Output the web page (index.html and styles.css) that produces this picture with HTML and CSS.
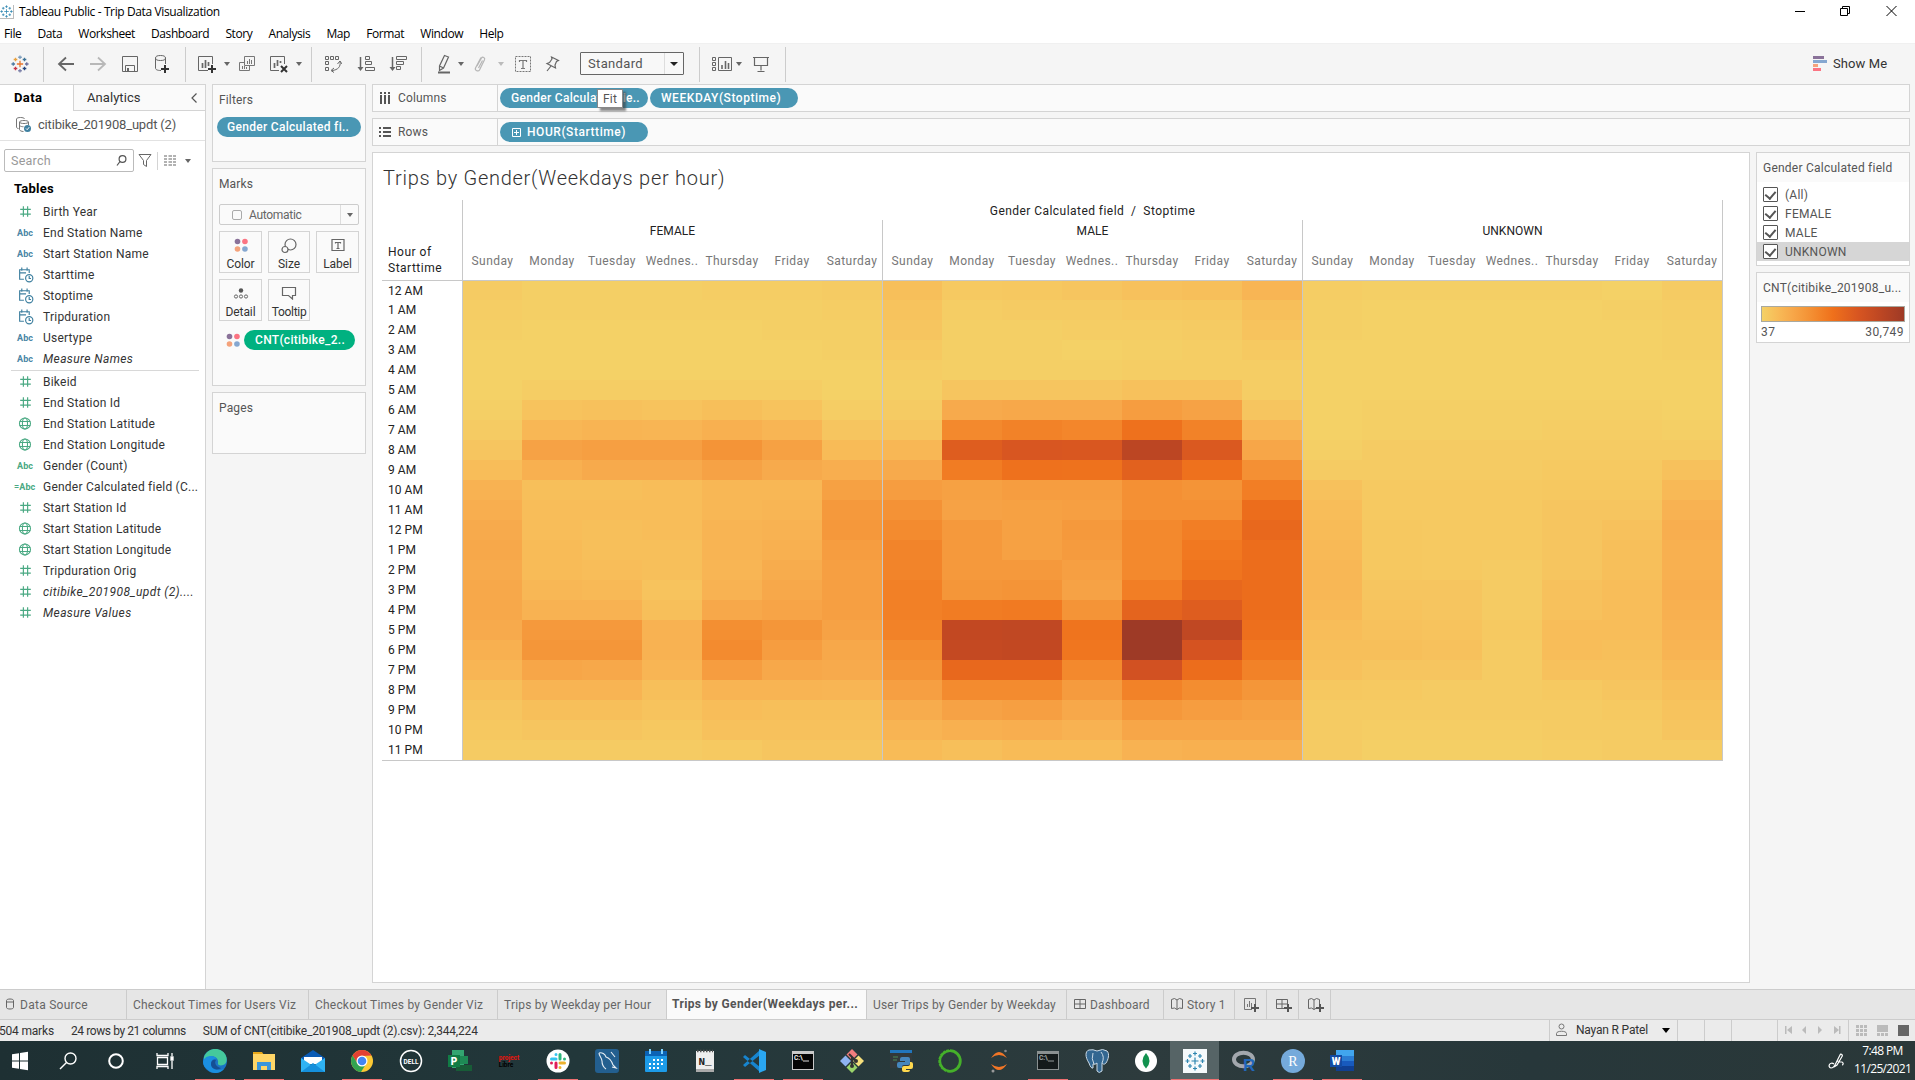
FILE: index.html
```html
<!DOCTYPE html>
<html lang="en">
<head>
<meta charset="utf-8">
<title>Tableau Public - Trip Data Visualization</title>
<link rel="stylesheet" href="styles.css">
</head>
<body>
<svg class="defs" aria-hidden="true">
  <symbol id="hash" viewBox="0 0 16 16"><path d="M6 3v10M10 3v10M3 6h10M3 10.500h10" stroke="#4aa983" stroke-width="1.100" fill="none"/></symbol>
  <symbol id="globe" viewBox="0 0 16 16"><g fill="none" stroke="#4aa983"><circle cx="7.500" cy="8" r="5.200"/><ellipse cx="7.500" cy="8" rx="2.400" ry="5.200"/><path d="M2.500 6.200h10M2.500 9.800h10"/></g></symbol>
  <symbol id="date" viewBox="0 0 16 16"><g fill="none" stroke="#3f80a0" stroke-width="1.100"><path d="M6.500 12.500H2.500v-9h9v3M2.500 6.500h6M4.500 1.500v3M9.500 1.500v3"/><circle cx="11.500" cy="11.500" r="3.400"/><path d="M11.500 9.500v2.300h1.700"/></g></symbol>
  <symbol id="dots" viewBox="0 0 16 16"><circle cx="4" cy="4" r="3.200" fill="#8a7299"/><circle cx="12.500" cy="4" r="3.200" fill="#fb7482"/><circle cx="4" cy="12.500" r="3.200" fill="#f4a27b"/><circle cx="12.500" cy="12.500" r="3.200" fill="#85a7d0"/></symbol>
  <symbol id="plus" viewBox="0 0 8 8"><path d="M4 0v8M0 4h8" stroke="#555" stroke-width="2"/></symbol>
  <symbol id="grid" viewBox="0 0 14 14"><path d="M1.500 2.500h11v9h-11zM1.500 7h11M7 2.500v9" fill="none" stroke="#666"/></symbol>
  <symbol id="book" viewBox="0 0 14 14"><path d="M1.500 2.500l3-1 2.500 1.500 2.500-1.500 3 1v9l-3-.5-2.500 1.500-2.500-1.500-3 .5zM7 3v9.500" fill="none" stroke="#666"/></symbol>
  <symbol id="tableau" viewBox="0 0 20 20"><g fill="none" stroke-width="1.400"><path d="M10 6.500v7M6.500 10h7" stroke="#e8762b"/><path d="M10 .5v4M8 2.500h4" stroke="#7a9cbc"/><path d="M10 15.500v4M8 17.500h4" stroke="#7a7fa8"/><path d="M.5 10h4M2.500 8v4" stroke="#4a78a0"/><path d="M15.500 10h4M17.500 8v4" stroke="#6b6f9c"/><path d="M5 3v4M3 5h4" stroke="#e9a13d"/><path d="M15 3v4M13 5h4" stroke="#3d7396"/><path d="M5 13v4M3 15h4" stroke="#c93545"/><path d="M15 13v4M13 15h4" stroke="#24437c"/></g></symbol>
  <symbol id="tableau-blue" viewBox="0 0 20 20"><path d="M10 6.500v7M6.500 10h7M10 .5v4M8 2.500h4M10 15.500v4M8 17.500h4M.5 10h4M2.500 8v4M15.500 10h4M17.500 8v4M5 3v4M3 5h4M15 3v4M13 5h4M5 13v4M3 15h4M15 13v4M13 15h4" fill="none" stroke="#2f86b0" stroke-width="1.200"/></symbol>
  <symbol id="console" viewBox="0 0 24 24"><rect x="1" y="2" width="22" height="19" fill="#c9c9c9"/><rect x="2" y="5" width="20" height="15" fill="#050505"/><path d="M12 12h6" stroke="#ddd"/></symbol>
</svg>

<header class="titlebar">
  <span class="app-icon"><svg width="13" height="13"><use href="#tableau-blue"/></svg></span>
  <span class="app-title">Tableau Public - Trip Data Visualization</span>
  <svg class="window-buttons" width="102" height="12" fill="none" stroke="#000"><path d="M0 6.500h10"/><path d="M45.500 3.500h7v7h-7zM47.500 3.500v-2h7v7h-2"/><path d="M91.500 1l10 10M101.500 1l-10 10"/></svg>
</header>
<nav class="menubar"><span>File</span><span>Data</span><span>Worksheet</span><span>Dashboard</span><span>Story</span><span>Analysis</span><span>Map</span><span>Format</span><span>Window</span><span>Help</span></nav>

<div class="toolbar">
  <svg width="18" height="18"><use href="#tableau"/></svg>
  <i class="sep"></i>
  <svg width="18" height="18" fill="none" stroke="#666" stroke-width="1.800"><path d="M17 9H2M9 2.500L2 9l7 6.500"/></svg>
  <svg width="18" height="18" fill="none" stroke="#b8b8b8" stroke-width="1.800"><path d="M1 9h15M9 2.500L16 9l-7 6.500"/></svg>
  <svg width="18" height="18" fill="none" stroke="#666"><path d="M1.500 1.500h15v15h-15zM4.500 16.500v-6h9v6"/><path d="M7 13v3" stroke-width="2"/></svg>
  <svg width="18" height="20" fill="none" stroke="#666"><path d="M8 16.500c-4 0-5.500-1-5.500-2.500V4M12.500 4v6"/><ellipse cx="7.500" cy="4" rx="5" ry="2.500"/><path d="M12 11v8M8 15h8" stroke="#333" stroke-width="2"/></svg>
  <i class="sep"></i>
  <svg width="20" height="20" fill="none" stroke="#666"><path d="M11 16.500H1.500v-14h14V10"/><path d="M5.500 14V9M8.500 14V6M11.500 12V8" stroke-width="1.700"/><path d="M15 11v8M11 15h8" stroke="#333" stroke-width="2"/></svg>
  <i class="caret"></i>
  <svg width="18" height="18" fill="none" stroke="#777"><path d="M6.500 1.500h10v9h-10zM6.500 7.500h-5v8h10v-5M9.500 9V6M11.500 9V4M13.500 9V5M4.500 14v-3M6.500 14v-3M8.500 14v-2"/></svg>
  <svg width="20" height="20" fill="none" stroke="#666"><path d="M10 16.500H1.500v-14h14V10"/><path d="M5.500 14V9M8.500 12V6M11.500 9V7" stroke-width="1.700"/><path d="M12 12l6 6M18 12l-6 6" stroke="#333" stroke-width="2"/></svg>
  <i class="caret"></i>
  <i class="sep"></i>
  <svg width="18" height="18" fill="none" stroke="#666"><path d="M1.500 1.500h3v3h-3zM6.500 1.500h3v3h-3zM11.500 1.500h3v3h-3zM1.500 6.500h3v3h-3zM1.500 12.500h3v3h-3zM16 6.500c1 5-2 8.500-8 9M13.500 9l2.500-3 2 3M10 13l-3 2.500 3 2"/></svg>
  <svg width="18" height="18" fill="none" stroke="#666"><path d="M3.500 2v12" stroke-width="1.500"/><path d="M.5 12l3 4 3-4z" fill="#666" stroke="none"/><path d="M8.500 1.500h4v3h-4zM8.500 6.500h6v3h-6zM8.500 12.500h9v3h-9z"/></svg>
  <svg width="18" height="18" fill="none" stroke="#666"><path d="M3.500 2v12" stroke-width="1.500"/><path d="M.5 12l3 4 3-4z" fill="#666" stroke="none"/><path d="M7.500 1.500h10v3h-10zM7.500 6.500h7v3h-7zM7.500 11.500h4v3h-4z"/></svg>
  <i class="sep"></i>
  <svg width="18" height="20" fill="none" stroke="#666" stroke-width="1.200"><path d="M9.500 1.500l4 1.500-5 11-4 2.500v-4.500zM4.500 12l4 2"/><path d="M3 18.500h12" stroke-width="2"/></svg>
  <i class="caret"></i>
  <svg width="18" height="18" fill="none" stroke="#b5b5b5" stroke-width="1.200"><path d="M5 11l4.500-8c1-1.600 4-.4 3 1.800L7.500 15c-1.200 2-5 .5-4-2L9 2.500M6.500 13l4-7.500"/></svg>
  <i class="caret pale"></i>
  <svg width="18" height="18" fill="none" stroke="#777"><path d="M1.500 1.500h15v15h-15z" stroke-dasharray="2 1"/><path d="M5.500 7V5.500h7V7M9 5.500v8M7 13.500h4" stroke-width="1.200"/></svg>
  <svg width="18" height="18" fill="none" stroke="#666" stroke-width="1.200"><path d="M7.500 2l7 3.500-2 1-1.500 3.500.5 3-8.500-4.500 2.500-1 2.500-3.500zM7 11l-4 5"/></svg>
  <div class="select"><span>Standard</span><b><i></i></b></div>
  <i class="sep"></i>
  <svg width="20" height="18" fill="none" stroke="#666"><path d="M.5 2.500h3v3h-3zM.5 7.500h3v3h-3zM.5 12.500h3v3h-3zM6.500 2.500h13v13h-13z"/><path d="M10 14v-4M13.500 14V6M16.500 14V8" stroke-width="1.600"/></svg>
  <i class="caret"></i>
  <svg width="18" height="18" fill="none" stroke="#666" stroke-width="1.200"><path d="M1 2.500h16M2.500 2.500v8h13v-8M9 10.500v5M5.500 16.500h7"/></svg>
  <i class="sep"></i>
  <div class="show-me"><svg width="14" height="16"><path fill="#8a7299" d="M0 0h11v3H0z"/><path fill="#85a7d0" d="M0 4h14v3H0z"/><path fill="#f4a27b" d="M0 8h5v3H0z"/><path fill="#fb7482" d="M0 12h8v3H0z"/></svg>Show Me</div>
</div>

<main class="workspace">
  <aside class="data-pane">
    <div class="pane-tabs"><b>Data</b><span>Analytics<svg width="6" height="10" fill="none" stroke="#555" stroke-width="1.200"><path d="M5.500 .5L1 5l4.500 4.500"/></svg></span></div>
    <div class="source"><svg width="17" height="17" fill="none" stroke="#777"><path d="M1.500 3c0-2 8-2 8 0M1.500 3v8c0 1 1 1.500 2 1.500M4.500 6c0-2 9-2 9 0s-9 2-9 0v7.500c0 1 2 2 4 2M13.500 6v3M4.500 9.500c1 1 3 1.300 4 1.200"/><circle cx="12.500" cy="12.500" r="3.500" fill="#3f80a0" stroke="none"/><path d="M11 12.500l1.200 1.200 2-2.500" stroke="#fff"/></svg>citibike_201908_updt (2)</div>
    <div class="search-row">
      <div class="search">Search<svg width="11" height="11" fill="none" stroke="#555" stroke-width="1.200"><circle cx="6.500" cy="4" r="3.400"/><path d="M4 6.500L1 10.500"/></svg></div>
      <svg width="14" height="13" fill="none" stroke="#666"><path d="M1 .5h12L8.500 6.500v6l-3-2v-4z"/></svg>
      <i class="mini-sep"></i>
      <svg width="13" height="11" stroke="#666" stroke-width="1.200"><path d="M0 1h3M4.500 1H8M9 1h3M0 4h3M4.500 4H8M9 4h3M0 7h3M4.500 7H8M9 7h3M0 10h3M4.500 10H8M9 10h3"/></svg>
      <i class="caret"></i>
    </div>
    <h2>Tables</h2>
    <ul class="fields">
      <li><svg><use href="#hash"/></svg>Birth Year</li>
      <li><b>Abc</b>End Station Name</li>
      <li><b>Abc</b>Start Station Name</li>
      <li><svg><use href="#date"/></svg>Starttime</li>
      <li><svg><use href="#date"/></svg>Stoptime</li>
      <li><svg><use href="#date"/></svg>Tripduration</li>
      <li><b>Abc</b>Usertype</li>
      <li><b>Abc</b><em>Measure Names</em></li>
    </ul>
    <ul class="fields measures">
      <li><svg><use href="#hash"/></svg>Bikeid</li>
      <li><svg><use href="#hash"/></svg>End Station Id</li>
      <li><svg><use href="#globe"/></svg>End Station Latitude</li>
      <li><svg><use href="#globe"/></svg>End Station Longitude</li>
      <li><b>Abc</b>Gender (Count)</li>
      <li><b>=Abc</b>Gender Calculated field (C...</li>
      <li><svg><use href="#hash"/></svg>Start Station Id</li>
      <li><svg><use href="#globe"/></svg>Start Station Latitude</li>
      <li><svg><use href="#globe"/></svg>Start Station Longitude</li>
      <li><svg><use href="#hash"/></svg>Tripduration Orig</li>
      <li><svg><use href="#hash"/></svg><em>citibike_201908_updt (2)....</em></li>
      <li><svg><use href="#hash"/></svg><em>Measure Values</em></li>
    </ul>
  </aside>

  <aside class="cards">
    <section class="card filters"><h3>Filters</h3><span class="pill">Gender Calculated fi..</span></section>
    <section class="card marks">
      <h3>Marks</h3>
      <div class="mark-type"><i></i><span>Automatic</span><b><i class="caret"></i></b></div>
      <div class="mark-grid">
        <div><svg width="14" height="14"><use href="#dots"/></svg>Color</div>
        <div><svg width="16" height="16" fill="none" stroke="#666" stroke-width="1.200"><circle cx="9.500" cy="6.500" r="5.500"/><circle cx="4" cy="11.500" r="3" fill="#fafafa"/></svg>Size</div>
        <div><svg width="14" height="14" fill="none" stroke="#666" stroke-width="1.200"><path d="M1 1.500h12v11H1zM4.500 5.500v-1h5v1M7 4.500v6M5.500 10.500h3"/></svg>Label</div>
        <div><svg width="16" height="14" fill="none" stroke="#666"><circle cx="8" cy="4.500" r="2.200" fill="#555" stroke="none"/><circle cx="3" cy="10.500" r="1.600"/><circle cx="8" cy="10.500" r="1.600"/><circle cx="13" cy="10.500" r="1.600"/></svg>Detail</div>
        <div><svg width="16" height="14" fill="none" stroke="#666" stroke-width="1.200"><path d="M1.500 1.500h13v8h-3v3.500l-4-3.500h-6z"/></svg>Tooltip</div>
      </div>
      <div class="encoding"><svg width="14" height="14"><use href="#dots"/></svg><span class="pill green">CNT(citibike_2..</span></div>
    </section>
    <section class="card pages"><h3>Pages</h3></section>
  </aside>

  <div class="stage">
    <div class="shelf">
      <div class="shelf-name"><svg width="12" height="12" stroke="#555" stroke-width="2"><path d="M2 3v9M6 3v9M10 3v9M2 0v2M6 0v2M10 0v2"/></svg>Columns</div>
      <span class="pill">Gender Calculated fie..</span><span class="pill">WEEKDAY(Stoptime)</span>
      <span class="tip">Fit</span>
    </div>
    <div class="shelf">
      <div class="shelf-name"><svg width="12" height="12" stroke="#555" stroke-width="2"><path d="M0 2h2M4 2h8M0 6h2M4 6h8M0 10h2M4 10h8"/></svg>Rows</div>
      <span class="pill expandable"><svg width="9" height="9" fill="none" stroke="#fff"><path d="M.5 .5h8v8h-8zM4.500 2v5M2 4.500h5"/></svg>HOUR(Starttime)</span>
    </div>
    <div class="stage-body">
      <section class="viz">
        <h1>Trips by Gender(Weekdays per hour)</h1>
        <div class="table">
          <div class="corner">Hour of<br>Starttime</div>
          <div class="col-head">
            <div class="dims">Gender Calculated field &nbsp;/ &nbsp;Stoptime</div>
            <div class="groups" id="groups"></div>
          </div>
          <div class="hours" id="hours"></div>
          <div class="heat" id="heat"></div>
        </div>
      </section>
      <aside class="legends">
        <section class="legend">
          <h4>Gender Calculated field</h4>
          <label><i></i>(All)</label>
          <label><i></i>FEMALE</label>
          <label><i></i>MALE</label>
          <label class="selected"><i></i>UNKNOWN</label>
        </section>
        <section class="legend color-legend">
          <h4>CNT(citibike_201908_u...</h4>
          <div class="ramp"></div>
          <div class="ramp-labels"><span>37</span><span>30,749</span></div>
        </section>
      </aside>
    </div>
  </div>
</main>

<nav class="sheets">
  <span class="source-tab"><svg width="8" height="12" fill="none" stroke="#666"><path d="M.5 2.500v7c0 2 7 2 7 0v-7c0-2-7-2-7 0zM.5 4h7"/></svg>Data Source</span>
  <span>Checkout Times for Users Viz</span>
  <span>Checkout Times by Gender Viz</span>
  <span>Trips by Weekday per Hour</span>
  <span class="active">Trips by Gender(Weekdays per...</span>
  <span>User Trips by Gender by Weekday</span>
  <span class="iconic"><svg width="14" height="14"><use href="#grid"/></svg>Dashboard</span>
  <span class="iconic"><svg width="14" height="14"><use href="#book"/></svg>Story 1</span>
  <span class="add"><svg width="17" height="17" fill="none" stroke="#777"><path d="M9 12.500H1.500v-11h11V8M4.500 10V7M6.500 10V4M8.500 10V6"/><use href="#plus" x="8" y="7" width="8" height="8"/></svg></span>
  <span class="add"><svg width="17" height="17"><use href="#grid" x="0" y="0" width="14" height="14"/><use href="#plus" x="9" y="7" width="8" height="8"/></svg></span>
  <span class="add"><svg width="17" height="17"><use href="#book" x="0" y="0" width="14" height="14"/><use href="#plus" x="9" y="7" width="8" height="8"/></svg></span>
</nav>

<footer class="status">
  <span>504 marks</span><span>24 rows by 21 columns</span><span>SUM of CNT(citibike_201908_updt (2).csv): 2,344,224</span>
  <div class="status-right">
    <div><svg width="11" height="14" fill="none" stroke="#777"><circle cx="5.500" cy="3.500" r="2.500"/><path d="M.5 12.500v-2c0-3 10-3 10 0v2z"/></svg>Nayan R Patel<i class="caret dark"></i></div>
    <div></div><div></div><div></div>
    <div><svg width="56" height="8" fill="#bbb"><path d="M0 0h1.500v8H0zM7 0v8L2 4zM21 0v8l-4-4zM33 0v8l4-4zM49 0v8l5-4zM54 0h1.500v8H54z"/></svg></div>
    <div><svg width="54" height="11" fill="#bbb"><path d="M0 0h3v3H0zM4 0h3v3H4zM8 0h3v3H8zM0 4h3v3H0zM4 4h3v3H4zM8 4h3v3H8zM0 8h3v3H0zM4 8h3v3H4zM8 8h3v3H8zM21 0h11v7H21zM21 8h3v3h-3zM25 8h3v3h-3zM29 8h3v3h-3z"/><path d="M42 0h11v11H42z" fill="#666"/></svg></div>
  </div>
</footer>

<footer class="taskbar">
  <span class="start"><svg viewBox="0 0 24 24"><path fill="#fff" d="M4 5.200l7-1v7.300H4zM12 4l8-1.200v8.700h-8zM4 12.500h7v7.300l-7-1zM12 12.500h8v8.700L12 20z"/></svg></span>
  <span><svg viewBox="0 0 24 24" fill="none" stroke="#fff" stroke-width="1.400"><circle cx="14.500" cy="9.500" r="5.500"/><path d="M10.500 13.500L4 20"/></svg></span>
  <span><svg viewBox="0 0 24 24" fill="none" stroke="#fff" stroke-width="2"><circle cx="12" cy="12" r="6.800"/></svg></span>
  <span><svg viewBox="0 0 24 24" fill="none" stroke="#fff" stroke-width="1.300"><path d="M4 4v2.500h11V4M4.500 8.500h10v7h-10zM4 20v-2.500h11V20M19 4v3M19 12v8"/><path d="M18 8h2v3h-2z" fill="#fff"/></svg></span>
  <span class="run"><svg viewBox="0 0 24 24"><circle cx="12" cy="12" r="12" fill="#1b74c4"/><path d="M1 8C4 0 13-2 19 2c5 3 6 10 3 13-2 2-8 2-7-1 1-5-5-8-9-6-2 0-4 1-5 3z" fill="#45c99c"/><path d="M0 13c1-7 11-8 14-3-4-1-6 2-6 5 1 6 7 7 13 5-4 5-12 5-16 1-3-2-5-5-5-8z" fill="#1b8fe0"/><path d="M8 15c0-3 2-5 5-4-2 3 0 7 5 8-4 3-10 1-10-4z" fill="#154f94"/></svg></span>
  <span class="run"><svg viewBox="0 0 24 24"><path fill="#e7a81a" d="M1 3h9l2 3v5H1z"/><path fill="#ffd667" d="M1 5h22v16H1z"/><path fill="#3b96dc" d="M5 13h14v8h-4v-4H9v4H5z"/></svg></span>
  <span><svg viewBox="0 0 24 24"><path fill="#0a5bb5" d="M0 9l12-8 12 8v5H0z"/><path fill="#fff" d="M3 8h18v7H3z"/><path fill="#2fb3f3" d="M0 9l12 8 12-8v14H0z"/><path fill="#1590dc" d="M0 23l12-9 12 9z"/></svg></span>
  <span class="run"><svg viewBox="0 0 24 24"><circle cx="12" cy="12" r="11" fill="#fcc934"/><path fill="#e34133" d="M2.500 6.500a11 11 0 0 1 19 0L12 7v5l-3.500 4z"/><path fill="#32a350" d="M2.500 6.500A11 11 0 0 0 11 23l5-8H8z"/><circle cx="12" cy="12" r="5.500" fill="#fff"/><circle cx="12" cy="12" r="4.300" fill="#4285f4"/></svg></span>
  <span><svg viewBox="0 0 24 24"><circle cx="12" cy="12" r="10.500" fill="none" stroke="#fff" stroke-width="1.500"/><text x="12" y="14.700" text-anchor="middle" class="mini" fill="#fff">DELL</text></svg></span>
  <span><svg viewBox="0 0 24 24"><path fill="#33a571" d="M4 1h12v18H4z"/><path fill="#1e8a55" d="M12 7h8v8h-8z"/><path fill="#185c37" d="M8 16h16v6H8z"/><rect y="6" width="12" height="12" fill="#117c45"/><text x="6" y="15.500" text-anchor="middle" class="letter" fill="#fff">P</text></svg></span>
  <span><svg viewBox="0 0 24 24"><text x="12" y="11" text-anchor="middle" class="mini" fill="#e8130c">project</text><text x="9" y="18" text-anchor="middle" class="mini" fill="#000">Libre</text></svg></span>
  <span class="run"><svg viewBox="0 0 24 24"><circle cx="12" cy="12" r="11.500" fill="#fff"/><g stroke-width="3" stroke-linecap="round"><path stroke="#36c5f0" d="M10 5.500v0M5.500 10H10"/><path stroke="#2eb67d" d="M14 5.500V10M18.500 10v0"/><path stroke="#ecb22e" d="M14 14h4.500M14 18.500v0"/><path stroke="#e01e5a" d="M10 14v4.500M5.500 14v0"/></g></svg></span>
  <span><svg viewBox="0 0 24 24"><rect width="24" height="24" rx="3" fill="#235f8f"/><path d="M4 4c3-1 6 1 7 4 4 1 6 5 7 8l3 3-4-1M4 4c0 3 3 5 3 8s1 6 4 8M16 3l4 5" fill="none" stroke="#e7eef4" stroke-width="1.100"/></svg></span>
  <span><svg viewBox="0 0 24 24"><rect x="1" y="2" width="22" height="21" rx="1" fill="#1d9be8"/><path fill="#0b63b5" d="M1 2h22v5H1z"/><path stroke="#7fd2ff" stroke-width="2" d="M6 0v5M18 0v5"/><path stroke="#fff" stroke-width="2" stroke-dasharray="2 2" d="M9 11h10M5 15h14M5 19h10"/></svg></span>
  <span><svg viewBox="0 0 24 24"><path fill="#eee" d="M3 2h18v18H3z"/><path fill="#aaa" d="M3 20h18v3H3z"/><path stroke="#555" stroke-width="2.500" stroke-dasharray="1.500 1.500" d="M4 2h16"/><text x="12" y="16" text-anchor="middle" class="code" fill="#222">N_</text></svg></span>
  <span class="run"><svg viewBox="0 0 24 24"><path d="M1 8l2-2 15 12v5zM1 16l2 2L18 6V1z" fill="#1785cf"/><path fill="#2aa7f2" d="M17 0l7 3v18l-7 3z"/></svg></span>
  <span class="run"><svg viewBox="0 0 24 24"><use href="#console"/><text x="3" y="11" class="mini" fill="#eee">C:\</text></svg></span>
  <span><svg viewBox="0 0 24 24"><path fill="#f27d7d" d="M12 0l5.500 5.500L12 11 6.500 5.500z"/><path fill="#8fb4f2" d="M5.500 6.500L11 12l-5.500 5.500L0 12z"/><path fill="#f6df7c" d="M18.500 6.500L24 12l-5.500 5.500L13 12z"/><path fill="#9ad46b" d="M12 13l5.500 5.500L12 24l-5.500-5.500z"/><path stroke="#333" stroke-width="2" fill="none" d="M9 5l3 3v9M12 8l4 4"/><circle cx="12" cy="17" r="2" fill="#333"/><circle cx="16" cy="12" r="2" fill="#333"/></svg></span>
  <span><svg viewBox="0 0 24 24"><path fill="#32393b" d="M1 1h22v18H1z"/><path fill="#2176bd" d="M1 1h22v3H1z"/><path stroke="#4d8b57" d="M4 8h5M4 11h4"/><path fill="#4586bd" d="M13 8h6a2 2 0 0 1 2 2v4a2 2 0 0 1-2 2h-4a2 2 0 0 0-2 2v1h-3a2 2 0 0 1-2-2v-2a2 2 0 0 1 2-2h6v-1h-5v-2a2 2 0 0 1 2-2z"/><path fill="#ffd94e" d="M19 23h-4a2 2 0 0 1-2-2v-2a2 2 0 0 1 2-2h4a2 2 0 0 0 2-2v-2h1a2 2 0 0 1 2 2v3a2 2 0 0 1-2 2h-5v1h4a2 2 0 0 1-2 2z"/></svg></span>
  <span><svg viewBox="0 0 24 24" fill="none"><circle cx="12" cy="12" r="10.300" stroke="#45b02a" stroke-width="2.800"/><path stroke="#233" stroke-dasharray="1 3" d="M12 .5a11.500 11.500 0 0 0 0 23"/></svg></span>
  <span><svg viewBox="0 0 24 24"><path fill="#f37626" d="M4 9q8-12 16 0-8-6-16 0zM4 15q8 12 16 0-8 6-16 0z"/><circle cx="18.500" cy="2" r="1.300" fill="#888"/><circle cx="6" cy="22" r="1.500" fill="#999"/></svg></span>
  <span class="run"><svg viewBox="0 0 24 24" opacity=".6"><use href="#console"/><text x="3" y="11" class="mini" fill="#eee">C:\</text></svg></span>
  <span><svg viewBox="0 0 24 24"><path d="M4 14C0 8 0 2 4 1q4-1 8 1 6-3 10 0c3 3 1 9-1 12-2 2-3 1-4 0v8q-3 3-5 0V14q-2 2-4 1v4q-2 1-4-5z" fill="#336791" stroke="#cbdae6"/><path d="M8 4q-2 6 1 11M16 3q4 5 1 11" fill="none" stroke="#cbdae6"/></svg></span>
  <span><svg viewBox="0 0 24 24"><circle cx="12" cy="12" r="11" fill="#fff"/><path fill="#12924f" d="M12 4q7 8 0 15.500Q5 12 12 4z"/></svg></span>
  <span class="run current"><svg viewBox="0 0 24 24"><path fill="#f5f9fb" d="M0 0h24v24H0z"/><use href="#tableau-blue" x="2" y="2" width="20" height="20"/></svg></span>
  <span><svg viewBox="0 0 24 24"><ellipse cx="11.500" cy="10.500" rx="9.500" ry="6.800" fill="none" stroke="#a3a8ae" stroke-width="4"/><text x="11" y="21.500" class="big-r" fill="#2267ba">R</text></svg></span>
  <span class="run"><svg viewBox="0 0 24 24"><circle cx="12" cy="12" r="12" fill="#75aadb"/><text x="12" y="17" text-anchor="middle" class="r" fill="#fff">R</text></svg></span>
  <span class="run"><svg viewBox="0 0 24 24"><path fill="#41a5ee" d="M6 1h18v6H6z"/><path fill="#2b7cd3" d="M6 7h18v5H6z"/><path fill="#185abd" d="M6 12h18v5H6z"/><path fill="#103f91" d="M6 17h18v5H6z"/><path fill="#124ba4" d="M0 6h12v12H0z"/><text x="6" y="15.500" text-anchor="middle" class="letter" fill="#fff">W</text></svg></span>
  <svg class="pen" width="16" height="16" fill="none" stroke="#fff" stroke-width="1.200"><path d="M6 11c-4-3-7 3-3 4 3 0 4-3 5-5l4-8c1-2 3 0 2 1.500L9 12l-3 2M9 8l5 1c2 1 1 3 0 3"/></svg>
  <div class="clock">7:48 PM<br>11/25/2021</div>
</footer>
<script src="heatmap.js"></script>
</body>
</html>
```
FILE: styles.css
```css
* { box-sizing: border-box; }
body { margin: 0; height: 1080px; display: flex; flex-direction: column; overflow: hidden; background: #f5f5f5; color: #333; font: 12px/16px Roboto, sans-serif; letter-spacing: .23px; }
h1, h2, h3, h4, ul { margin: 0; padding: 0; font-weight: 400; list-style: none; }
svg { display: block; flex: none; }
.defs { position: absolute; width: 0; height: 0; }

.titlebar, .menubar { background: #fff; color: #000; font-family: "Open Sans", sans-serif; letter-spacing: -.38px; display: flex; align-items: center; flex: none; }
.titlebar { height: 24px; }
.app-icon { width: 14px; height: 14px; border: solid #bbb; border-width: 0 1px 1px 0; margin-right: 5px; }
.app-title { flex: 1; }
.window-buttons { margin: -3px 18px 0 0; }
.menubar { height: 19px; padding-left: 4px; gap: 16.200px; letter-spacing: -.42px; }

.toolbar { flex: none; height: 41px; padding-left: 11px; border-top: 1px solid #f0f0f0; display: grid; align-items: center; justify-items: start; grid-template-columns: 32px 14px 32px 32px 32px 32px 12px 27px 14px 31px 27px 15px 13px 33px 32px 32px 14px 23px 14px 26px 16px 30px 36px 119px 13px 24px 16px 33px 1028px auto; }
.sep { width: 1px; height: 35px; background: #ccc; }
.caret { width: 0; height: 0; border: 3px solid transparent; border-top: 4px solid #666; border-bottom: 0; }
.caret.pale { border-top-color: #bbb; }
.caret.dark { border-width: 5px 4px 0; border-top-color: #000; }
.select { width: 104px; height: 23px; margin-top: -1px; border: 1px solid #666; border-radius: 1px; background: #f8f8f8; display: flex; align-items: center; font-size: 13px; letter-spacing: .34px; color: #555; }
.select span { flex: 1; padding-left: 7px; }
.select b { width: 19px; height: 100%; border-left: 1px solid #ddd; display: grid; place-items: center; }
.select b i { border: 4px solid transparent; border-top-color: #222; margin-top: 4px; }
.show-me { display: flex; gap: 6px; align-items: center; font-size: 13px; letter-spacing: .1px; color: #333; white-space: nowrap; margin-top: -1px; }

.workspace { flex: none; height: 905px; display: grid; grid-template-columns: 206px 154px 1538px; column-gap: 6px; }
.data-pane { background: #fff; border-right: 1px solid #d4d4d4; }
.pane-tabs { height: 27px; display: flex; font-size: 13px; line-height: 25px; border-top: 1px solid #d4d4d4; }
.pane-tabs b { width: 73px; padding-left: 14px; color: #000; letter-spacing: .4px; }
.pane-tabs span { flex: 1; display: flex; justify-content: space-between; align-items: center; padding: 0 8px 0 13px; background: #fafafa; border: solid #d4d4d4; border-width: 0 0 1px 1px; letter-spacing: .06px; }
.source { height: 30px; padding: 0 0 2px 15px; display: flex; align-items: center; gap: 6px; font-size: 13px; letter-spacing: -.18px; border-bottom: 1px solid #e2e2e2; color: #555; }
.search-row { height: 23px; margin: 8px 0 0 4px; display: flex; align-items: center; }
.search { width: 130px; height: 23px; border: 1px solid #bbb; border-radius: 2px; display: flex; align-items: center; justify-content: space-between; padding: 0 6px; color: #999; font-size: 12.500px; margin-right: 4px; }
.mini-sep { width: 1px; height: 18px; background: #d4d4d4; margin: 0 6px 0 5px; }
.search-row .caret { margin-left: 8px; }
.data-pane h2 { font-size: 13px; font-weight: 700; color: #000; padding-left: 14px; height: 29px; line-height: 34px; }
.fields li { height: 21px; display: flex; align-items: center; padding-left: 17px; white-space: nowrap; }
.fields svg { width: 17px; height: 17px; margin-right: 9px; }
.fields b { width: 26px; flex: none; color: #4a86a5; font-size: 9px; letter-spacing: .1px; }
.fields em { letter-spacing: .4px; }
.fields.measures { margin: 1px 6px 0 11px; border-top: 1px solid #d8d8d8; }
.measures li { padding-left: 6px; }
.measures b { color: #4aa983; }
.measures li:nth-child(6) b { width: 29px; margin-left: -3px; }

.cards { display: grid; grid-template-rows: 78px 218px 62px; row-gap: 6px; align-content: start; }
.card { background: #fafafa; border: 1px solid #d4d4d4; }
.card h3 { font-size: 12px; padding-left: 6px; color: #555; line-height: 31px; height: 32px; letter-spacing: .14px; }
.pill { display: flex; align-items: center; height: 20px; border-radius: 10px; background: #4a97b4; color: #fff; font-weight: 500; letter-spacing: .3px; white-space: nowrap; }
.filters .pill { width: 144px; margin-left: 4px; padding-left: 10px; }
.mark-type { height: 21px; margin: 3px 6px 6px; border: 1px solid #ccc; border-radius: 2px; display: flex; align-items: center; color: #666; }
.mark-type > i { width: 10px; height: 10px; margin: 0 7px 0 12px; border: 1.500px solid #aaa; border-radius: 2px; }
.mark-type span { flex: 1; letter-spacing: -.3px; }
.mark-type b { width: 18px; height: 100%; border-left: 1px solid #ddd; display: grid; place-items: center; }
.mark-grid { display: grid; grid-template-columns: 43px 42px 43px; grid-auto-rows: 42px; gap: 6px; margin-left: 6px; }
.mark-grid div { border: 1px solid #d4d4d4; display: flex; flex-direction: column; align-items: center; justify-content: space-between; padding: 6px 0 0; letter-spacing: -.1px; line-height: 15px; }
.mark-grid div:last-child { letter-spacing: -.3px; }
.encoding { display: flex; align-items: center; margin: 9px 0 0 13px; gap: 4px; }
.green { background: #00b180; width: 111px; padding-left: 11px; }

.stage { min-width: 0; display: flex; flex-direction: column; gap: 6px; }
.shelf { position: relative; height: 28px; flex: none; border: 1px solid #d4d4d4; background: #fafafa; display: flex; align-items: center; gap: 2px; }
.shelf-name { width: 125px; height: 100%; border-right: 1px solid #d4d4d4; display: flex; align-items: center; gap: 7px; padding-left: 6px; color: #555; letter-spacing: .14px; }
.shelf .pill { width: 148px; padding-left: 11px; letter-spacing: .55px; }
.shelf .pill:nth-child(2):not(.expandable) { letter-spacing: .3px; }
.expandable svg { margin-right: 6px; margin-left: 1px; }
.tip { position: absolute; left: 224px; top: 4px; width: 26px; height: 19px; line-height: 18px; text-align: center; border: 1px solid #888; background: #fff; box-shadow: 3px 3px 2px rgba(60, 60, 60, .6); color: #555; }
.stage-body { flex: none; height: 831px; display: grid; grid-template-columns: 1378px 154px; gap: 6px; }
.viz { background: #fff; border: 1px solid #d4d4d4; padding: 0 0 0 9px; }
.viz h1 { font-size: 20px; font-weight: 300; letter-spacing: .73px; line-height: 24px; height: 47px; padding: 13px 0 0 1px; }
.table { display: grid; grid-template-columns: 80px 1261px; grid-template-rows: 81px 480px; }
.corner { padding: 44px 0 0 6px; border-bottom: 1px solid #c8c8c8; letter-spacing: .5px; color: #222; }
.col-head { border: solid #c8c8c8; border-width: 0 1px 1px; }
.dims { height: 20px; line-height: 22px; text-align: center; letter-spacing: .45px; color: #222; }
.groups { display: grid; grid-template-columns: 419px 420px 420px; }
.group { height: 60px; }
.group + .group { border-left: 1px solid #c8c8c8; }
.group-name { text-align: center; height: 20px; line-height: 22px; letter-spacing: .05px; color: #222; }
.days { display: grid; grid-template-columns: 59px repeat(6, 60px); text-align: center; color: #777; line-height: 42px; letter-spacing: .45px; white-space: nowrap; }
.hours { border-bottom: 1px solid #c8c8c8; color: #222; letter-spacing: .05px; display: grid; grid-template-rows: 19px; grid-auto-rows: 20px; line-height: 20px; padding-left: 6px; }
.heat { display: grid; grid-template-columns: 420px 420px 420px; border: solid #c8c8c8; border-width: 0 1px 1px 0; }
.block { border-left: 1px solid #c8c8c8; display: grid; grid-template-columns: 59px repeat(6, 60px); grid-template-rows: 19px; grid-auto-rows: 20px; }

.legends { display: flex; flex-direction: column; gap: 6px; }
.legend { border: 1px solid #d4d4d4; background: #fff; height: 114px; white-space: nowrap; }
.legend h4 { height: 29px; line-height: 30px; background: #fafafa; padding-left: 6px; color: #555; }
.legend label { display: flex; align-items: center; height: 19px; padding-left: 6px; gap: 7px; color: #555; letter-spacing: .25px; }
.legend label:nth-of-type(1) { margin-top: 3px; }
.legend label i { width: 15px; height: 15px; border: 1px solid #555; border-radius: 1px; background: #fff; display: grid; place-items: center; }
.legend label i::after { content: ""; width: 5px; height: 8px; border: solid #555; border-width: 0 2px 2px 0; transform: translateY(-1px) rotate(40deg); }
.legend .selected { background: #d6d6d6; }
.color-legend { height: 71px; }
.ramp { height: 16px; margin: 4px 4px 2px; border: 1px solid #a9a9a0; background: linear-gradient(90deg, #f4d166, #f8bc58 10.500%, #f7a84a 21%, #f49538 31.600%, #f28026 42%, #ef701b 50%, #e4641e 58%, #d75521 68%, #bc4623 84%, #9e3a26); }
.ramp-labels { display: flex; justify-content: space-between; padding: 0 5px 0 4px; letter-spacing: .45px; color: #555; }

.sheets { flex: none; height: 31px; background: #e6e6e6; border: solid #ccc; border-width: 1px 0; display: grid; grid-template-columns: 127px 182px 189px 169px 200px 200px 97px 71px 32px 32px 32px; color: #666; }
.sheets span { border-right: 1px solid #ccc; display: flex; align-items: center; padding-left: 6px; white-space: nowrap; letter-spacing: .2px; }
.sheets .source-tab { gap: 6px; padding-left: 6px; letter-spacing: .27px; }
.sheets .source-tab svg, .sheets .iconic svg { margin-top: -2px; }
.sheets .active { background: #fafafa; color: #555; font-weight: 700; letter-spacing: .37px; padding: 0 0 1px 5px; }
.sheets .iconic { gap: 3px; }
.sheets .add { padding: 1px 0 0 8px; }

.status { flex: none; height: 21px; background: #ebebeb; display: flex; align-items: center; letter-spacing: -.19px; gap: 17px; }
.status > span:first-child { margin-left: -1px; }
.status > span:nth-child(2) { letter-spacing: -.4px; }
.status-right { margin-left: auto; height: 100%; display: grid; grid-template-columns: 128px 27px 27px 46px 71px 67px; }
.status-right div { border-left: 1px solid #ccc; display: flex; align-items: center; padding: 0 0 1px 7px; }
.status-right div:first-child { gap: 9px; padding-left: 6px; }
.status-right .caret { margin-left: 5px; }

.taskbar { flex: none; height: 40px; padding-right: 4px; background: linear-gradient(90deg, #1e3033, #22373a 30%, #2d3b3d 60%, #27373a 80%, #2a3839); display: grid; grid-template-columns: 44px 48px 48px 50px repeat(24, 49px) 1fr 57px; align-items: center; color: #fff; }
.taskbar span { height: 40px; display: grid; place-items: center; }
.taskbar span svg { width: 24px; height: 24px; overflow: visible; }
.taskbar .start { padding-right: 4px; }
.run { background: linear-gradient(#ee7071, #ee7071) center bottom / 40px 2px no-repeat; }
.current { background: linear-gradient(#ee7071, #ee7071) center bottom / 48px 2px no-repeat, #566466; }
.mini { font: 700 6.500px/1 Roboto, sans-serif; letter-spacing: 0; }
.letter { font: 900 10px/1 Roboto, sans-serif; letter-spacing: 0; }
.code { font: 700 11px/1 "Liberation Mono", monospace; letter-spacing: 0; }
.r { font: 14px/1 "Liberation Serif", serif; }
.big-r { font: 700 17px/1 "Liberation Sans", sans-serif; letter-spacing: 0; }
.pen { justify-self: end; margin-right: 10px; }
.clock { font: 12px/18px "Open Sans", sans-serif; letter-spacing: -.65px; text-align: center; white-space: nowrap; margin-top: -2px; }
```
FILE: heatmap.js
```javascript
// Trip counts per hour and weekday, as a percentage of the busiest cell.
const counts = {
  FEMALE: `3 1 1 1 2 2 3|2 1 1 1 1 1 2|1 0 0 0 0 1 1|0 0 0 0 0 0 1|0 0 0 0 0 0 0|0 2 2 2 2 2 0|1 7 8 7 9 7 2|3 13 15 14 17 14 6|6 24 26 26 32 25 11|10 17 20 20 24 20 18|16 9 9 10 13 13 25|18 10 10 10 13 14 29|20 10 9 10 15 16 30|21 11 9 9 15 17 27|20 11 10 9 14 19 26|21 13 12 7 16 21 26|21 16 16 9 21 23 26|20 29 29 16 35 31 24|17 31 31 16 37 27 21|14 22 21 14 27 21 20|9 15 15 9 15 15 14|6 9 9 7 10 9 9|5 6 6 5 8 8 8|3 3 3 3 4 6 6`,
  MALE: `9 4 5 6 8 9 14|7 2 3 3 4 5 9|6 1 1 2 2 3 7|4 1 1 0 1 2 4|2 1 1 1 2 2 2|1 6 6 6 8 8 2|3 20 21 21 27 24 6|6 38 41 39 50 41 14|13 63 68 67 84 66 22|20 44 50 49 60 50 34|27 25 27 27 34 32 43|33 24 25 26 34 34 52|37 29 25 29 38 43 55|40 29 25 28 38 46 52|40 29 29 26 38 48 52|42 31 32 24 43 55 52|42 44 45 32 58 63 52|41 81 82 48 100 82 51|36 80 81 47 100 70 47|32 55 55 38 72 52 41|26 37 37 28 41 36 31|19 24 26 21 30 27 25|15 17 18 16 22 22 22|11 9 11 11 16 17 17`,
  UNKNOWN: `2 1 1 1 1 0 3|1 0 0 0 0 1 2|1 0 0 0 0 0 1|0 0 0 0 0 0 1|0 0 0 0 0 0 0|0 0 0 0 0 0 0|0 1 1 1 1 1 0|0 1 1 1 2 2 1|1 3 3 3 3 3 3|3 3 3 3 4 4 8|8 4 4 4 5 5 12|10 4 4 4 6 6 16|11 5 4 4 6 8 18|12 5 4 4 6 9 17|13 5 4 3 6 9 17|13 6 6 3 8 10 18|12 7 6 3 8 10 17|10 8 7 4 10 10 16|9 9 8 3 10 9 15|8 6 6 3 8 8 12|5 4 3 3 4 6 9|3 3 3 3 3 4 7|3 2 2 2 3 3 6|3 1 1 1 2 3 3`
};
const days = ['Sunday', 'Monday', 'Tuesday', 'Wednes..', 'Thursday', 'Friday', 'Saturday'];
const ramp = ['f4d166', 'f6c760', 'f8bc58', 'f8b252', 'f7a84a', 'f69e41', 'f49538', 'f38b2f', 'f28026', 'f0751e', 'eb6c1c', 'e4641e', 'de5d1f', 'd75521', 'cf4f22', 'c64a22', 'bc4623', 'b24223', 'a83e24', '9e3a26']
  .map(h => [0, 2, 4].map(i => parseInt(h.slice(i, i + 2), 16)));

function colour(percent) {
  const x = percent / 100 * (ramp.length - 1);
  const i = Math.min(Math.floor(x), ramp.length - 2);
  return `rgb(${ramp[i].map((c, k) => Math.round(c + (ramp[i + 1][k] - c) * (x - i)))})`;
}

document.getElementById('groups').innerHTML = Object.keys(counts).map(name =>
  `<div class="group"><div class="group-name">${name}</div><div class="days">${days.map(d => `<span>${d}</span>`).join('')}</div></div>`).join('');
document.getElementById('hours').innerHTML = Array.from({ length: 24 }, (_, h) =>
  `<div>${h % 12 || 12} ${h < 12 ? 'AM' : 'PM'}</div>`).join('');
document.getElementById('heat').innerHTML = Object.values(counts).map(block =>
  `<div class="block">${block.split(/[| ]/).map(v => `<i style="background:${colour(+v)}"></i>`).join('')}</div>`).join('');
```
